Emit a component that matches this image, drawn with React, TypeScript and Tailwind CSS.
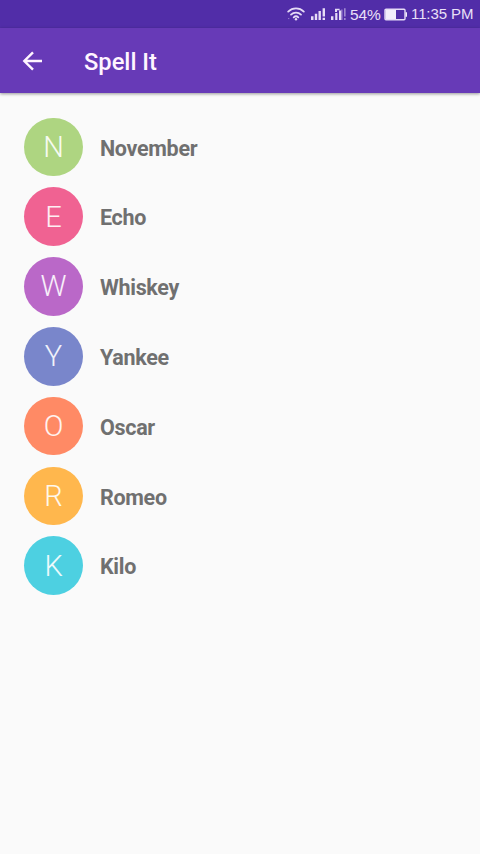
const words = [
  { word: "November", color: "bg-[#aed581]" },
  { word: "Echo", color: "bg-[#f06292]" },
  { word: "Whiskey", color: "bg-[#ba68c8]" },
  { word: "Yankee", color: "bg-[#7986cb]" },
  { word: "Oscar", color: "bg-[#ff8a65]" },
  { word: "Romeo", color: "bg-[#ffb74d]" },
  { word: "Kilo", color: "bg-[#4dd0e1]" },
];

function WifiIcon() {
  return (
    <svg width="18" height="14" viewBox="0 0 18 14" fill="none" stroke="#e6dcf6" strokeWidth="1.8" strokeLinecap="round">
      <path d="M1.2 4.6C5.6.4 12.4.4 16.8 4.6" />
      <path d="M4 7.6c2.8-2.7 7.2-2.7 10 0" />
      <path d="M6.7 10.3c1.3-1.2 3.3-1.2 4.6 0" />
      <circle cx="9" cy="12.2" r="1.2" fill="#e6dcf6" stroke="none" />
      <path d="M1.5 11.6h.4" strokeWidth="1" opacity=".5" />
    </svg>
  );
}

function SignalIcon() {
  return (
    <svg width="16" height="14" viewBox="0 0 16 14" fill="#e6dcf6">
      <path d="M1 9.2h2.5V13H1zM4.8 6.8h2.4V13H4.8zM8.5 4h2.4v9H8.5zM12.6 1.2H15v8.2h-2.4zM12.6 10.8H15V13h-2.4z" />
    </svg>
  );
}

function RoamingSignalIcon() {
  return (
    <svg width="16" height="14" viewBox="0 0 16 14" fill="#e6dcf6">
      <path d="M0 9.2h2.4V13H0zM4.2 6h2.2v7H4.2zM4 1.8h4.6v1.4H6V5H4zM8 3.6h2.2V13H8z" />
      <path d="M10.4 2.5h1V13h-1zM13.2 1.2h1.3v8.2h-1.3zM13.2 11h1.3v2h-1.3z" opacity=".65" />
    </svg>
  );
}

function BatteryIcon() {
  return (
    <svg width="24" height="13" viewBox="0 0 24 13" fill="none">
      <rect x="1" y="1.2" width="20" height="10.6" rx="1" stroke="#e6dcf6" strokeWidth="1.4" />
      <path d="M1.5 2H12v9H1.5zM21.5 4.2H23v4.6h-1.5z" fill="#f3edfc" />
    </svg>
  );
}

export default function App() {
  return (
    <div className="flex h-[854px] w-[480px] flex-col overflow-hidden bg-[#fafafa] font-['Roboto',sans-serif]">
      <div className="flex h-7 shrink-0 items-center bg-[#512da8] pl-[287px] font-['Liberation_Sans',sans-serif] text-[15px] text-[#e9e0f7]">
        <WifiIcon />
        <div className="ml-[5px]"><SignalIcon /></div>
        <div className="ml-[5px]"><RoamingSignalIcon /></div>
        <span className="ml-[3px] w-[31px] whitespace-nowrap pt-px text-[15.5px] tracking-[-0.1px]">54%</span>
        <div className="ml-[3px]"><BatteryIcon /></div>
        <span className="ml-[3px] whitespace-nowrap pt-px tracking-[-0.1px]">11:35 PM</span>
      </div>
      <header className="z-10 flex h-[65px] shrink-0 items-center bg-[#673ab7] pl-[22px] text-[#fff5ff] shadow-[0_1px_3px_rgba(0,0,0,0.4)]">
        <svg width="21" height="20" viewBox="0 0 21 20" fill="none" stroke="currentColor" strokeWidth="2.4">
          <path d="M20 10H3M11 1.3 2.3 10l8.7 8.7" />
        </svg>
        <h1 className="ml-[41px] pt-[3px] text-[23.7px] font-medium leading-7">Spell It</h1>
      </header>
      <main className="pl-[24.3px] pt-[19px]">
        {words.map(({ word, color }) => (
          <div key={word} className="flex h-[69.8px] items-center">
            <div className={`flex size-[58.5px] items-center justify-center rounded-full pt-px text-[29px] font-light leading-none text-white/90 ${color}`}>
              {word[0]}
            </div>
            <span className="ml-[17.2px] pt-[3.6px] text-[21.5px] font-bold leading-6 tracking-[-0.3px] text-[#707070]">{word}</span>
          </div>
        ))}
      </main>
    </div>
  );
}
